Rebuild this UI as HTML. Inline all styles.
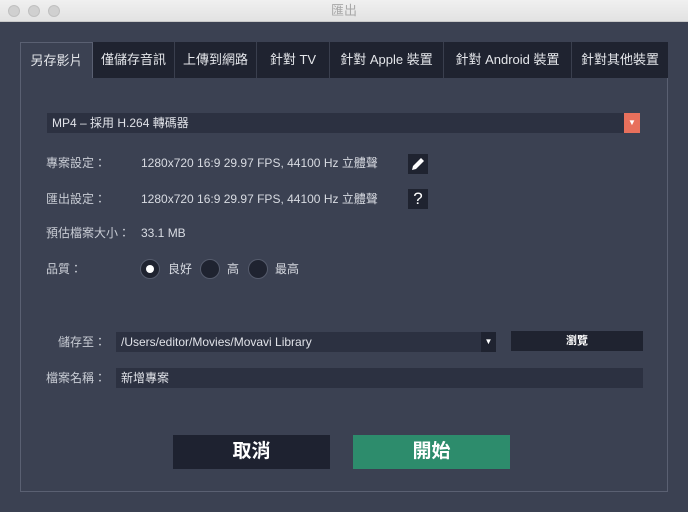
<!DOCTYPE html>
<html><head><meta charset="utf-8"><style>
*{margin:0;padding:0;box-sizing:border-box}
body{width:688px;height:512px;background:#3b4152;font-family:"Liberation Sans","Noto Sans CJK TC",sans-serif;color:#d8dbe2;font-size:12px;position:relative;overflow:hidden}
.a{position:absolute}
.t{height:20px;line-height:20px}
.title{left:0;top:0;width:688px;height:22px;background:linear-gradient(#f0f0f0,#e2e2e2);border-bottom:1px solid #c8c8c8;text-align:center;line-height:22px;color:#a8a8a8;font-size:13px}
.dot{width:12px;height:12px;border-radius:50%;background:#d0d0d0;border:1px solid #c0c0c0;top:5px}
.panel{left:20px;top:78px;width:648px;height:414px;border:1px solid #5a6072;border-top:none}
.tab{top:42px;height:36px;background:#1f2330;border-right:1px solid #3a3f4e;line-height:36px;text-align:center;font-size:13px;color:#e4e6ea}
.tab.on{background:#3b4152;border:1px solid #5a6072;border-bottom:none}
.field{background:#2c3141;color:#e0e2e8;padding-left:5px}
.lbl{color:#c8ccd4}
.radio{width:20px;height:20px;border-radius:50%;background:#1f2330;border:1px solid #555b6c}
.btn{height:34px;line-height:34px;text-align:center;font-size:19px;font-weight:bold;color:#fff}
</style></head><body>
<div class="a title">匯出</div>
<div class="a dot" style="left:8px"></div><div class="a dot" style="left:28px"></div><div class="a dot" style="left:48px"></div>
<div class="a panel"></div>
<div class="a tab on" style="left:20px;width:73px">另存影片</div>
<div class="a tab" style="left:93px;width:82px">僅儲存音訊</div>
<div class="a tab" style="left:175px;width:82px">上傳到網路</div>
<div class="a tab" style="left:257px;width:73px">針對 TV</div>
<div class="a tab" style="left:330px;width:114px">針對 Apple 裝置</div>
<div class="a tab" style="left:444px;width:128px">針對 Android 裝置</div>
<div class="a tab" style="left:572px;width:96px;border-right:none">針對其他裝置</div>

<div class="a field" style="left:47px;top:113px;width:593px;height:20px;line-height:20px">MP4 – 採用 H.264 轉碼器</div>
<div class="a" style="left:624px;top:113px;width:16px;height:20px;background:#e8705c;color:#fff;font-size:8px;text-align:center;line-height:20px">▼</div>

<div class="a lbl t" style="left:46px;top:153px">專案設定：</div>
<div class="a t" style="left:141px;top:153px">1280x720 16:9 29.97 FPS, 44100 Hz 立體聲</div>
<div class="a" style="left:408px;top:154px;width:20px;height:20px;background:#1f2330"><svg width="20" height="20"><path d="M4 16 L5 12 L13 4 L16 7 L8 15 Z" fill="#fff"/></svg></div>
<div class="a lbl t" style="left:46px;top:189px">匯出設定：</div>
<div class="a t" style="left:141px;top:189px">1280x720 16:9 29.97 FPS, 44100 Hz 立體聲</div>
<div class="a" style="left:408px;top:189px;width:20px;height:20px;background:#1f2330;color:#fff;font-size:17px;text-align:center;line-height:20px">?</div>
<div class="a lbl t" style="left:46px;top:223px">預估檔案大小：</div>
<div class="a t" style="left:141px;top:223px">33.1 MB</div>
<div class="a lbl t" style="left:46px;top:259px">品質：</div>
<div class="a radio" style="left:140px;top:259px"><div style="width:8px;height:8px;border-radius:50%;background:#fff;margin:5px"></div></div>
<div class="a t" style="left:168px;top:259px">良好</div>
<div class="a radio" style="left:200px;top:259px"></div>
<div class="a t" style="left:227px;top:259px">高</div>
<div class="a radio" style="left:248px;top:259px"></div>
<div class="a t" style="left:275px;top:259px">最高</div>

<div class="a lbl t" style="left:58px;top:332px">儲存至：</div>
<div class="a field" style="left:116px;top:332px;width:380px;height:20px;line-height:20px">/Users/editor/Movies/Movavi Library</div>
<div class="a" style="left:481px;top:332px;width:15px;height:20px;background:#1f2330;color:#fff;font-size:8px;text-align:center;line-height:20px">▼</div>
<div class="a" style="left:511px;top:331px;width:132px;height:20px;background:#1f2330;color:#fff;text-align:center;line-height:20px;font-size:11px;font-weight:bold">瀏覽</div>
<div class="a lbl t" style="left:46px;top:368px">檔案名稱：</div>
<div class="a field" style="left:116px;top:368px;width:527px;height:20px;line-height:20px">新增專案</div>

<div class="a btn" style="left:173px;top:435px;width:157px;background:#1e2230">取消</div>
<div class="a btn" style="left:353px;top:435px;width:157px;background:#2d8c6c">開始</div>
</body></html>
